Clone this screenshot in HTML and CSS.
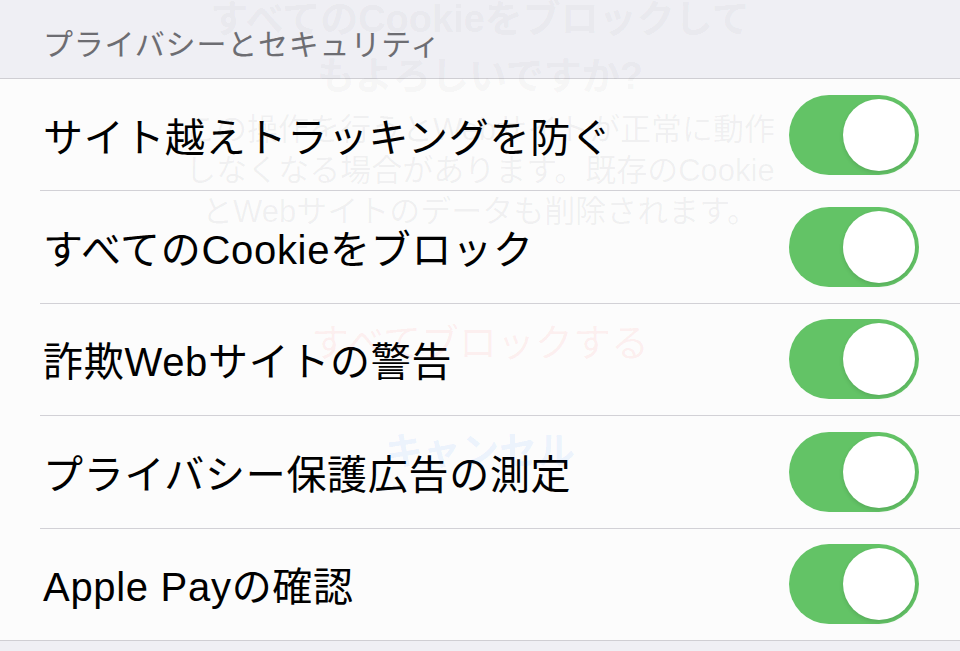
FILE: index.html
```html
<!DOCTYPE html>
<html lang="ja">
<head>
    <meta charset="UTF-8">
    <title>プライバシーとセキュリティ</title>
    <link rel="stylesheet" href="styles.css">
</head>
<body>

    <div class="section-title">プライバシーとセキュリティ</div>

    <div class="list">
        <div class="row">
            <span class="label">サイト越えトラッキングを防ぐ</span>
            <div class="switch"><div class="knob"></div></div>
        </div>
        <div class="row">
            <span class="label">すべてのCookieをブロック</span>
            <div class="switch"><div class="knob"></div></div>
        </div>
        <div class="row">
            <span class="label">詐欺Webサイトの警告</span>
            <div class="switch"><div class="knob"></div></div>
        </div>
        <div class="row">
            <span class="label">プライバシー保護広告の測定</span>
            <div class="switch"><div class="knob"></div></div>
        </div>
        <div class="row">
            <span class="label">Apple Payの確認</span>
            <div class="switch"><div class="knob"></div></div>
        </div>
    </div>

    <!-- フェードアウト中のアラート -->
    <div class="ghost-alert">
        <div class="ghost-title">すべてのCookieをブロックして<br>もよろしいですか?</div>
        <div class="ghost-body">この操作を行うとWebサイトが正常に動作<br>しなくなる場合があります。既存のCookie<br>とWebサイトのデータも削除されます。</div>
        <div class="ghost-button destructive">すべてブロックする</div>
        <div class="ghost-button cancel">キャンセル</div>
    </div>

</body>
</html>
```

FILE: styles.css
```css
body {
    font-family: 'Liberation Sans', 'Noto Sans CJK JP', sans-serif;
    background-color: #efeff4;
    margin: 0;
    padding: 0;
    height: 651px;
    overflow: hidden;
    position: relative;
}

.section-title {
    height: 78px;
    box-sizing: border-box;
    padding: 6px 43px 0;
    display: flex;
    align-items: center;
    font-size: 30px;
    letter-spacing: 0.8px;
    color: #6d6d72;
}

.list {
    background: #fcfcfc;
    border-top: 1px solid #cfced3;
    border-bottom: 1px solid #cfced3;
}

.row {
    margin-left: 40px;
    height: 111.4px;
    display: flex;
    align-items: center;
    justify-content: space-between;
    border-bottom: 1px solid #d2d1d6;
}

.row:last-child {
    border-bottom: none;
}

.label {
    padding-left: 3px;
    font-size: 40px;
    letter-spacing: 0.7px;
    color: #000;
}

.switch {
    width: 130px;
    height: 80px;
    margin-right: 41px;
    box-sizing: border-box;
    padding: 4px;
    border-radius: 40px;
    background: #63c366;
    display: flex;
    justify-content: flex-end;
}

.knob {
    width: 72px;
    height: 72px;
    border-radius: 50%;
    background: #fff;
    box-shadow: 0 2px 4px rgba(0, 0, 0, 0.12);
}

.ghost-alert {
    position: absolute;
    top: -9px;
    left: 160px;
    width: 640px;
    text-align: center;
    pointer-events: none;
}

.ghost-title {
    font-size: 38px;
    font-weight: bold;
    line-height: 57px;
    color: rgba(60, 60, 80, 0.055);
}

.ghost-body {
    margin-top: 4px;
    font-size: 31px;
    line-height: 41px;
    color: rgba(60, 60, 80, 0.065);
}

.ghost-button {
    height: 108px;
    line-height: 108px;
    font-size: 38px;
}

.destructive {
    margin-top: 57px;
    color: rgba(255, 59, 48, 0.07);
}

.cancel {
    font-weight: bold;
    color: rgba(0, 110, 255, 0.08);
}
```
